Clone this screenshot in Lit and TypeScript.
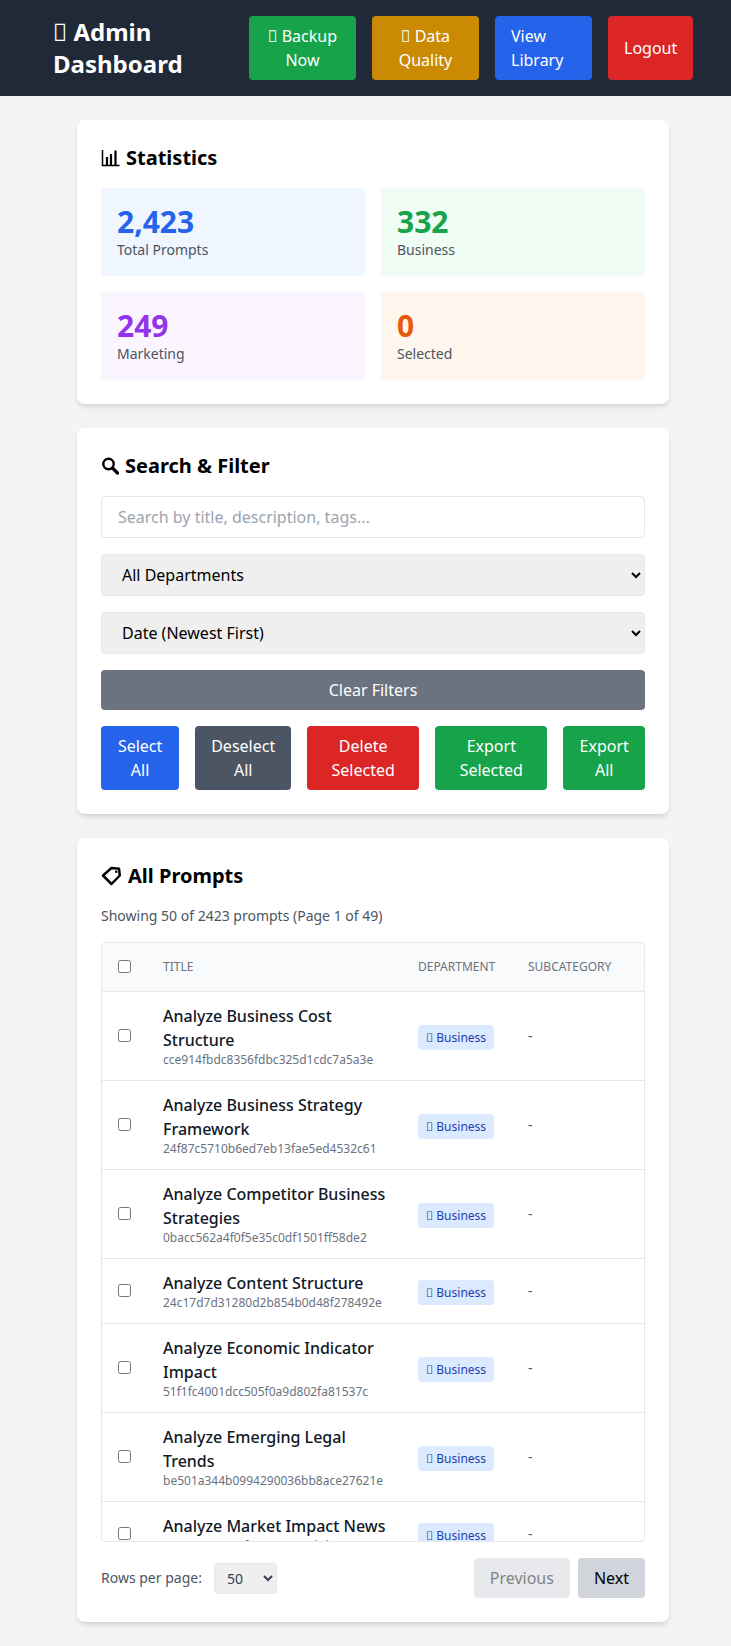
import { LitElement, html, css, svg } from 'lit';
import { customElement } from 'lit/decorators.js';

type Prompt = { title: string; id: string };

const stats = [
  { value: '2,423', label: 'Total Prompts', tone: 'blue' },
  { value: '332', label: 'Business', tone: 'green' },
  { value: '249', label: 'Marketing', tone: 'purple' },
  { value: '0', label: 'Selected', tone: 'orange' },
];

const prompts: Prompt[] = [
  { title: 'Analyze Business Cost Structure', id: 'cce914fbdc8356fdbc325d1cdc7a5a3e' },
  { title: 'Analyze Business Strategy Framework', id: '24f87c5710b6ed7eb13fae5ed4532c61' },
  { title: 'Analyze Competitor Business Strategies', id: '0bacc562a4f0f5e35c0df1501ff58de2' },
  { title: 'Analyze Content Structure', id: '24c17d7d31280d2b854b0d48f278492e' },
  { title: 'Analyze Economic Indicator Impact', id: '51f1fc4001dcc505f0a9d802fa81537c' },
  { title: 'Analyze Emerging Legal Trends', id: 'be501a344b0994290036bb8ace27621e' },
  { title: 'Analyze Market Impact News', id: 'a41c7903e5a2f86c1e07c3abd9a6c281' },
];

// the reference shows the missing-glyph box where its emoji had no font
const MISSING = '\uE000';

const chartIcon = svg`
  <svg class="icon" width="19" height="18" viewBox="0 0 19 18" aria-hidden="true">
    <path d="M1.5 1v15.5H18.5" fill="none" stroke="currentColor" stroke-width="1.5" />
    <path d="M6 8v8M10 5v11M14.5 1.5V16" fill="none" stroke="currentColor" stroke-width="2.2" />
  </svg>
`;

const searchIcon = svg`
  <svg class="icon" width="18" height="18" viewBox="0 0 18 18" aria-hidden="true">
    <circle cx="7.5" cy="7" r="5.2" fill="none" stroke="currentColor" stroke-width="2.4" />
    <path d="M11.5 11l5 5" fill="none" stroke="currentColor" stroke-width="3.2" stroke-linecap="round" />
  </svg>
`;

const tagIcon = svg`
  <svg class="icon" width="21" height="20" viewBox="0 0 21 20" aria-hidden="true">
    <path
      d="M2 9.5L10.5 2l7.5.8.8 6.7L10.5 18z"
      fill="none"
      stroke="currentColor"
      stroke-width="2.5"
      stroke-linejoin="round"
    />
    <circle cx="15.2" cy="5.8" r="1.3" />
  </svg>
`;

@customElement('app-root')
export class AppRoot extends LitElement {
  static styles = css`
    :host {
      display: block;
      min-height: 1646px;
      background: #f3f4f6;
      font-family: 'Noto Sans', sans-serif;
      color: #000;
    }

    * {
      box-sizing: border-box;
    }

    button,
    input,
    select {
      font-family: inherit;
      font-size: 16px;
      line-height: 24px;
    }

    button {
      border: 0;
      border-radius: 4px;
      padding: 8px 16px;
      color: #fff;
    }

    .topbar {
      display: flex;
      align-items: center;
      justify-content: space-between;
      height: 96px;
      padding: 0 38px 0 53px;
      background: #1f2937;
    }

    .topbar h1 {
      width: 160px;
      margin: 0;
      font-size: 24px;
      line-height: 32px;
      font-weight: 700;
      color: #fff;
    }

    .topbar nav {
      display: flex;
      gap: 16px;
    }

    .topbar button {
      height: 64px;
      flex: none;
    }

    .topbar .backup,
    .topbar .quality {
      width: 107px;
    }

    .topbar .library {
      width: 97px;
      text-align: left;
    }

    .topbar .logout {
      width: 85px;
    }

    .green { background: #16a34a; }
    .amber { background: #ca8a04; }
    .blue { background: #2563eb; }
    .red { background: #dc2626; }
    .slate { background: #4b5563; }

    main {
      display: flex;
      flex-direction: column;
      gap: 24px;
      padding: 24px 62px 24px 77px;
    }

    .card {
      padding: 24px;
      background: #fff;
      border-radius: 8px;
      box-shadow: 0 4px 6px -1px rgba(0, 0, 0, 0.1), 0 2px 4px -2px rgba(0, 0, 0, 0.1);
    }

    h2 {
      display: flex;
      align-items: center;
      gap: 6px;
      margin: 0 0 16px;
      font-size: 20px;
      line-height: 28px;
      font-weight: 700;
    }

    .icon {
      flex: none;
      fill: currentColor;
    }

    .stats {
      display: grid;
      grid-template-columns: 1fr 1fr;
      gap: 16px;
    }

    .stat {
      padding: 16px;
      border-radius: 4px;
    }

    .stat strong {
      display: block;
      font-size: 30px;
      line-height: 36px;
      font-weight: 700;
    }

    .stat span {
      display: block;
      font-size: 14px;
      line-height: 20px;
      color: #4b5563;
    }

    .stat.blue { background: #eff6ff; }
    .stat.blue strong { color: #2563eb; }
    .stat.green { background: #f0fdf4; }
    .stat.green strong { color: #16a34a; }
    .stat.purple { background: #faf5ff; }
    .stat.purple strong { color: #9333ea; }
    .stat.orange { background: #fff7ed; }
    .stat.orange strong { color: #ea580c; }

    .filters {
      display: flex;
      flex-direction: column;
      gap: 16px;
    }

    .filters input,
    .filters select {
      width: 100%;
      height: 42px;
      padding: 8px 16px;
      border: 1px solid #e5e7eb;
      border-radius: 4px;
    }

    .filters input {
      background: #fff;
    }

    .filters input::placeholder {
      color: #9ca3af;
    }

    .filters select {
      background-color: #efefef;
      color: #000;
    }

    .clear {
      background: #6b7280;
    }

    .actions {
      display: flex;
      gap: 16px;
    }

    .count {
      margin: 0 0 16px;
      font-size: 14px;
      line-height: 20px;
      color: #4b5563;
    }

    .table-wrap {
      height: 600px;
      overflow: auto;
      scrollbar-width: none;
      border: 1px solid #e5e7eb;
      border-radius: 4px;
    }

    table {
      width: 900px;
      table-layout: fixed;
      border-collapse: collapse;
    }

    .col-check { width: 45px; }
    .col-title { width: 255px; }
    .col-dept { width: 110px; }
    .col-sub { width: 116px; }
    .col-tags { width: 374px; }

    th {
      padding: 16px;
      background: #f9fafb;
      border-bottom: 1px solid #e5e7eb;
      text-align: left;
      font-size: 12px;
      line-height: 16px;
      font-weight: 400;
      text-transform: uppercase;
      color: #6b7280;
    }

    td {
      padding: 12px 16px;
      border-bottom: 1px solid #e5e7eb;
      vertical-align: middle;
      font-size: 14px;
      line-height: 20px;
      color: #4b5563;
    }

    input[type='checkbox'] {
      display: block;
      width: 13px;
      height: 13px;
      margin: 0 0 2px;
    }

    .title {
      font-size: 16px;
      line-height: 24px;
      font-weight: 500;
      color: #111827;
    }

    .hash {
      font-size: 12px;
      line-height: 16px;
      color: #6b7280;
    }

    .badge {
      display: inline-block;
      vertical-align: middle;
      margin-top: 2px;
      padding: 4px 8px;
      border-radius: 4px;
      background: #dbeafe;
      color: #1e40af;
      font-size: 12px;
      line-height: 17px;
      white-space: nowrap;
    }

    .pager {
      display: flex;
      align-items: center;
      justify-content: space-between;
      margin-top: 16px;
    }

    .rows {
      display: flex;
      align-items: center;
      gap: 12px;
      font-size: 14px;
      line-height: 20px;
      color: #4b5563;
    }

    .rows select {
      width: 63px;
      height: 31px;
      padding: 0 8px;
      border: 1px solid #e5e7eb;
      border-radius: 4px;
      background-color: #efefef;
      font-size: 14px;
      color: #374151;
    }

    .pages {
      display: flex;
      gap: 8px;
    }

    .pages button {
      color: #000;
      background: #d1d5db;
    }

    .pages button:disabled {
      opacity: 0.5;
    }
  `;

  render() {
    return html`
      <header class="topbar">
        <h1>${MISSING} Admin Dashboard</h1>
        <nav>
          <button class="green backup">${MISSING} Backup Now</button>
          <button class="amber quality">${MISSING} Data Quality</button>
          <button class="blue library">View Library</button>
          <button class="red logout">Logout</button>
        </nav>
      </header>
      <main>
        <section class="card">
          <h2>${chartIcon}<span>Statistics</span></h2>
          <div class="stats">
            ${stats.map(
              (s) => html`
                <div class="stat ${s.tone}">
                  <strong>${s.value}</strong>
                  <span>${s.label}</span>
                </div>
              `
            )}
          </div>
        </section>

        <section class="card">
          <h2>${searchIcon}<span>Search &amp; Filter</span></h2>
          <div class="filters">
            <input type="text" placeholder="Search by title, description, tags..." />
            <select><option>All Departments</option></select>
            <select><option>Date (Newest First)</option></select>
            <button class="clear">Clear Filters</button>
            <div class="actions">
              <button class="blue">Select All</button>
              <button class="slate">Deselect All</button>
              <button class="red">Delete Selected</button>
              <button class="green">Export Selected</button>
              <button class="green">Export All</button>
            </div>
          </div>
        </section>

        <section class="card">
          <h2>${tagIcon}<span>All Prompts</span></h2>
          <p class="count">Showing 50 of 2423 prompts (Page 1 of 49)</p>
          <div class="table-wrap">
            <table>
              <colgroup>
                <col class="col-check" />
                <col class="col-title" />
                <col class="col-dept" />
                <col class="col-sub" />
                <col class="col-tags" />
              </colgroup>
              <thead>
                <tr>
                  <th><input type="checkbox" /></th>
                  <th>Title</th>
                  <th>Department</th>
                  <th>Subcategory</th>
                  <th>Tags</th>
                </tr>
              </thead>
              <tbody>
                ${prompts.map(
                  (p) => html`
                    <tr>
                      <td><input type="checkbox" /></td>
                      <td>
                        <div class="title">${p.title}</div>
                        <div class="hash">${p.id}</div>
                      </td>
                      <td><span class="badge">${MISSING} Business</span></td>
                      <td>-</td>
                      <td></td>
                    </tr>
                  `
                )}
              </tbody>
            </table>
          </div>
          <div class="pager">
            <label class="rows">
              Rows per page:
              <select><option>50</option></select>
            </label>
            <div class="pages">
              <button disabled>Previous</button>
              <button>Next</button>
            </div>
          </div>
        </section>
      </main>
    `;
  }
}
